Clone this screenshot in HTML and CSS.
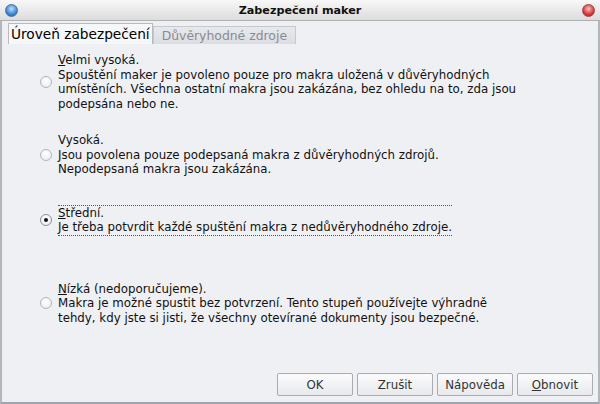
FILE: index.html
```html
<!DOCTYPE html>
<html lang="cs">
<head>
    <meta charset="UTF-8">
    <title>Zabezpečení maker</title>
    <link rel="stylesheet" href="styles.css">
</head>
<body>
    <div class="window">
        <div class="titlebar">
            <span class="orb orb-blue"></span>
            <span class="title">Zabezpečení maker</span>
            <span class="orb orb-red"></span>
        </div>

        <div class="tabs">
            <div class="tab active">Úroveň zabezpečení</div>
            <div class="tab">Důvěryhodné zdroje</div>
        </div>

        <div class="page">
            <div class="option opt-1">
                <span class="radio"></span>
                <div class="label"><u>V</u>elmi vysoká.<br>Spouštění maker je povoleno pouze pro makra uložená v důvěryhodných<br>umístěních. Všechna ostatní makra jsou zakázána, bez ohledu na to, zda jsou<br>podepsána nebo ne.</div>
            </div>
            <div class="option opt-2">
                <span class="radio"></span>
                <div class="label">Vysoká.<br>Jsou povolena pouze podepsaná makra z důvěryhodných zdrojů.<br>Nepodepsaná makra jsou zakázána.</div>
            </div>
            <div class="option opt-3">
                <span class="radio checked"></span>
                <div class="label focused"><u>S</u>třední.<br>Je třeba potvrdit každé spuštění makra z nedůvěryhodného zdroje.</div>
            </div>
            <div class="option opt-4">
                <span class="radio"></span>
                <div class="label"><u>N</u>ízká (nedoporučujeme).<br>Makra je možné spustit bez potvrzení. Tento stupeň používejte výhradně<br>tehdy, kdy jste si jisti, že všechny otevírané dokumenty jsou bezpečné.</div>
            </div>
        </div>

        <div class="buttons">
            <button>OK</button>
            <button>Zrušit</button>
            <button>Nápověda</button>
            <button><u>O</u>bnovit</button>
        </div>
    </div>
</body>
</html>
```

FILE: styles.css
```css
body {
    margin: 0;
    padding: 0;
    font-family: "DejaVu Sans", sans-serif;
    font-size: 11.8px;
    color: #111;
}

.window {
    width: 600px;
    height: 404px;
    box-sizing: border-box;
    background-color: #eff0f4;
    border-left: 2px solid #b4b6be;
    border-right: 2px solid #b4b6be;
    border-bottom: 2px solid #a2a4ac;
    display: flex;
    flex-direction: column;
}

.titlebar {
    height: 21px;
    box-sizing: border-box;
    display: flex;
    align-items: center;
    justify-content: space-between;
    padding: 0 5px;
    background: linear-gradient(#f8f8f8, #dcdcdc);
    border-bottom: 1px solid #b0b0b0;
    margin: 0 -2px;
}

.title {
    font-weight: bold;
    font-size: 11.2px;
}

.orb {
    width: 11px;
    height: 11px;
    border-radius: 50%;
}

.orb-blue {
    background: radial-gradient(circle at 50% 35%, #bfe0fb, #3d86d3 60%, #25589c);
    border: 1px solid #4a6f9c;
}

.orb-red {
    background: radial-gradient(circle at 50% 35%, #f8c0c0, #d8383c 60%, #9c2024);
    border: 1px solid #a04040;
}

.tabs {
    display: flex;
    align-items: flex-end;
    padding: 3px 6px 0;
    height: 20px;
}

.tab {
    height: 17px;
    line-height: 17px;
    padding: 0 8px;
    border: 1px solid #c6c8ce;
    border-bottom: none;
    background: linear-gradient(#e8e9ed, #dcdde2);
    color: #8a8b90;
    font-size: 12.4px;
}

.tab.active {
    height: 20px;
    line-height: 20px;
    padding: 0 2px;
    background: #f6f7f9;
    border-color: #b8bac0;
    color: #000;
    font-size: 13.7px;
}

.page {
    flex: 1;
    padding: 0 0 0 38px;
}

.option {
    display: flex;
    align-items: center;
    gap: 6px;
}

.opt-1 { margin-top: 8px; }
.opt-2 { margin-top: 20px; }
.opt-3 { margin-top: 27px; }
.opt-4 { margin-top: 45px; }

.radio {
    width: 10px;
    height: 10px;
    border-radius: 50%;
    border: 1px solid #b2b4ba;
    background: radial-gradient(circle at 50% 35%, #ffffff, #e8e9ed);
    position: relative;
    flex-shrink: 0;
}

.radio.checked {
    border-color: #8e9096;
}

.radio.checked::after {
    content: "";
    position: absolute;
    left: 3px;
    top: 3px;
    width: 4px;
    height: 4px;
    border-radius: 50%;
    background: #111;
}

.label {
    line-height: 14.5px;
    border-top: 1px solid transparent;
    border-bottom: 1px solid transparent;
}

.label.focused {
    border-top: 1px dotted #555;
    border-bottom: 1px dotted #555;
}

.buttons {
    display: flex;
    justify-content: flex-end;
    gap: 4px;
    padding: 0 5px 6px 0;
}

button {
    width: 76px;
    height: 23px;
    font-family: "DejaVu Sans", sans-serif;
    font-size: 11.8px;
    color: #333;
    background: linear-gradient(#fbfbfc, #e8e9ec);
    border: 1px solid #a9abb1;
    border-radius: 2px;
    padding: 0;
}
```
